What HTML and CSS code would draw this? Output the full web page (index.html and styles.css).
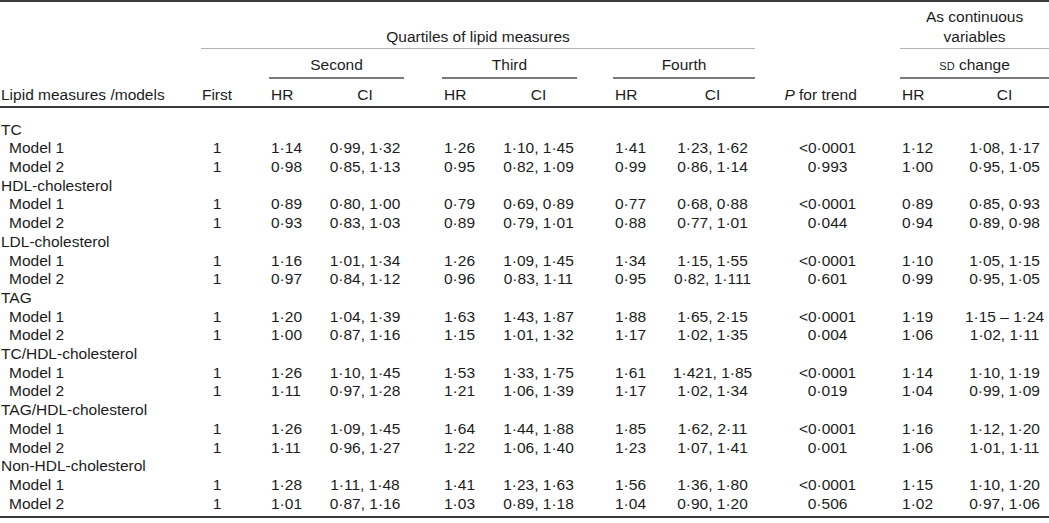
FILE: index.html
```html
<!DOCTYPE html>
<html lang="en">
<head>
<meta charset="utf-8">
<title>Lipid measures table</title>
<link rel="stylesheet" href="styles.css">
</head>
<body>
<table class="data">
  <colgroup>
    <col class="c-label"><col class="c-first"><col class="c-sp1">
    <col class="c-2hr"><col class="c-2ci"><col class="c-sp2">
    <col class="c-3hr"><col class="c-3ci"><col class="c-sp3">
    <col class="c-4hr"><col class="c-4ci"><col class="c-p">
    <col class="c-chr"><col class="c-cci">
  </colgroup>
  <thead>
    <tr class="h1">
      <th></th>
      <th colspan="10" class="span-light">Quartiles of lipid measures</th>
      <th></th>
      <th colspan="2" class="span-light">As continuous<br>variables</th>
    </tr>
    <tr class="h2">
      <th></th><th></th><th></th>
      <th colspan="2" class="span-dark">Second</th>
      <th></th>
      <th colspan="2" class="span-dark">Third</th>
      <th></th>
      <th colspan="2" class="span-dark">Fourth</th>
      <th></th>
      <th colspan="2" class="span-dark"><span class="sc">sd</span> change</th>
    </tr>
    <tr class="h3">
      <th class="lbl">Lipid measures /models</th>
      <th class="ctr">First</th>
      <th></th>
      <th class="hr">HR</th><th class="ctr">CI</th>
      <th></th>
      <th class="hr">HR</th><th class="ctr">CI</th>
      <th></th>
      <th class="hr">HR</th><th class="ctr">CI</th>
      <th class="ctr p"><i>P</i> for trend</th>
      <th class="hr">HR</th><th class="ctr">CI</th>
    </tr>
  </thead>
  <tbody>
    <tr class="grp first-row"><td class="lbl" colspan="14">TC</td></tr>
    <tr><td class="sub">Model 1</td><td class="ctr">1</td><td></td><td class="hr">1·14</td><td class="ctr">0·99, 1·32</td><td></td><td class="hr">1·26</td><td class="ctr">1·10, 1·45</td><td></td><td class="hr">1·41</td><td class="ctr">1·23, 1·62</td><td class="ctr">&lt;0·0001</td><td class="hr">1·12</td><td class="ctr">1·08, 1·17</td></tr>
    <tr><td class="sub">Model 2</td><td class="ctr">1</td><td></td><td class="hr">0·98</td><td class="ctr">0·85, 1·13</td><td></td><td class="hr">0·95</td><td class="ctr">0·82, 1·09</td><td></td><td class="hr">0·99</td><td class="ctr">0·86, 1·14</td><td class="ctr">0·993</td><td class="hr">1·00</td><td class="ctr">0·95, 1·05</td></tr>
    <tr class="grp"><td class="lbl" colspan="14">HDL-cholesterol</td></tr>
    <tr><td class="sub">Model 1</td><td class="ctr">1</td><td></td><td class="hr">0·89</td><td class="ctr">0·80, 1·00</td><td></td><td class="hr">0·79</td><td class="ctr">0·69, 0·89</td><td></td><td class="hr">0·77</td><td class="ctr">0·68, 0·88</td><td class="ctr">&lt;0·0001</td><td class="hr">0·89</td><td class="ctr">0·85, 0·93</td></tr>
    <tr><td class="sub">Model 2</td><td class="ctr">1</td><td></td><td class="hr">0·93</td><td class="ctr">0·83, 1·03</td><td></td><td class="hr">0·89</td><td class="ctr">0·79, 1·01</td><td></td><td class="hr">0·88</td><td class="ctr">0·77, 1·01</td><td class="ctr">0·044</td><td class="hr">0·94</td><td class="ctr">0·89, 0·98</td></tr>
    <tr class="grp"><td class="lbl" colspan="14">LDL-cholesterol</td></tr>
    <tr><td class="sub">Model 1</td><td class="ctr">1</td><td></td><td class="hr">1·16</td><td class="ctr">1·01, 1·34</td><td></td><td class="hr">1·26</td><td class="ctr">1·09, 1·45</td><td></td><td class="hr">1·34</td><td class="ctr">1·15, 1·55</td><td class="ctr">&lt;0·0001</td><td class="hr">1·10</td><td class="ctr">1·05, 1·15</td></tr>
    <tr><td class="sub">Model 2</td><td class="ctr">1</td><td></td><td class="hr">0·97</td><td class="ctr">0·84, 1·12</td><td></td><td class="hr">0·96</td><td class="ctr">0·83, 1·11</td><td></td><td class="hr">0·95</td><td class="ctr">0·82, 1·111</td><td class="ctr">0·601</td><td class="hr">0·99</td><td class="ctr">0·95, 1·05</td></tr>
    <tr class="grp"><td class="lbl" colspan="14">TAG</td></tr>
    <tr><td class="sub">Model 1</td><td class="ctr">1</td><td></td><td class="hr">1·20</td><td class="ctr">1·04, 1·39</td><td></td><td class="hr">1·63</td><td class="ctr">1·43, 1·87</td><td></td><td class="hr">1·88</td><td class="ctr">1·65, 2·15</td><td class="ctr">&lt;0·0001</td><td class="hr">1·19</td><td class="ctr">1·15 – 1·24</td></tr>
    <tr><td class="sub">Model 2</td><td class="ctr">1</td><td></td><td class="hr">1·00</td><td class="ctr">0·87, 1·16</td><td></td><td class="hr">1·15</td><td class="ctr">1·01, 1·32</td><td></td><td class="hr">1·17</td><td class="ctr">1·02, 1·35</td><td class="ctr">0·004</td><td class="hr">1·06</td><td class="ctr">1·02, 1·11</td></tr>
    <tr class="grp"><td class="lbl" colspan="14">TC/HDL-cholesterol</td></tr>
    <tr><td class="sub">Model 1</td><td class="ctr">1</td><td></td><td class="hr">1·26</td><td class="ctr">1·10, 1·45</td><td></td><td class="hr">1·53</td><td class="ctr">1·33, 1·75</td><td></td><td class="hr">1·61</td><td class="ctr">1·421, 1·85</td><td class="ctr">&lt;0·0001</td><td class="hr">1·14</td><td class="ctr">1·10, 1·19</td></tr>
    <tr><td class="sub">Model 2</td><td class="ctr">1</td><td></td><td class="hr">1·11</td><td class="ctr">0·97, 1·28</td><td></td><td class="hr">1·21</td><td class="ctr">1·06, 1·39</td><td></td><td class="hr">1·17</td><td class="ctr">1·02, 1·34</td><td class="ctr">0·019</td><td class="hr">1·04</td><td class="ctr">0·99, 1·09</td></tr>
    <tr class="grp"><td class="lbl" colspan="14">TAG/HDL-cholesterol</td></tr>
    <tr><td class="sub">Model 1</td><td class="ctr">1</td><td></td><td class="hr">1·26</td><td class="ctr">1·09, 1·45</td><td></td><td class="hr">1·64</td><td class="ctr">1·44, 1·88</td><td></td><td class="hr">1·85</td><td class="ctr">1·62, 2·11</td><td class="ctr">&lt;0·0001</td><td class="hr">1·16</td><td class="ctr">1·12, 1·20</td></tr>
    <tr><td class="sub">Model 2</td><td class="ctr">1</td><td></td><td class="hr">1·11</td><td class="ctr">0·96, 1·27</td><td></td><td class="hr">1·22</td><td class="ctr">1·06, 1·40</td><td></td><td class="hr">1·23</td><td class="ctr">1·07, 1·41</td><td class="ctr">0·001</td><td class="hr">1·06</td><td class="ctr">1·01, 1·11</td></tr>
    <tr class="grp"><td class="lbl" colspan="14">Non-HDL-cholesterol</td></tr>
    <tr><td class="sub">Model 1</td><td class="ctr">1</td><td></td><td class="hr">1·28</td><td class="ctr">1·11, 1·48</td><td></td><td class="hr">1·41</td><td class="ctr">1·23, 1·63</td><td></td><td class="hr">1·56</td><td class="ctr">1·36, 1·80</td><td class="ctr">&lt;0·0001</td><td class="hr">1·15</td><td class="ctr">1·10, 1·20</td></tr>
    <tr class="last-row"><td class="sub">Model 2</td><td class="ctr">1</td><td></td><td class="hr">1·01</td><td class="ctr">0·87, 1·16</td><td></td><td class="hr">1·03</td><td class="ctr">0·89, 1·18</td><td></td><td class="hr">1·04</td><td class="ctr">0·90, 1·20</td><td class="ctr">0·506</td><td class="hr">1·02</td><td class="ctr">0·97, 1·06</td></tr>
  </tbody>
</table>
</body>
</html>
```

FILE: styles.css
```css
html, body {
  margin: 0;
  padding: 0;
  background: #ffffff;
}

body {
  font-family: "Liberation Sans", Arial, sans-serif;
  font-size: 15.5px;
  color: #1c1c1c;
}

.data {
  width: 1049px;
  table-layout: fixed;
  border-collapse: separate;
  border-spacing: 0;
  border-top: 2px solid #3a3a3a;
  border-bottom: 2px solid #3a3a3a;
}

.c-label { width: 201px; }
.c-first { width: 32px; }
.c-sp1 { width: 36px; }
.c-2hr { width: 57px; }
.c-2ci { width: 78px; }
.c-sp2 { width: 38px; }
.c-3hr { width: 58px; }
.c-3ci { width: 77px; }
.c-sp3 { width: 36px; }
.c-4hr { width: 57px; }
.c-4ci { width: 85px; }
.c-p { width: 145px; }
.c-chr { width: 60px; }
.c-cci { width: 89px; }

th, td {
  padding: 0;
  font-weight: normal;
  white-space: nowrap;
  line-height: 19px;
}

thead th {
  vertical-align: bottom;
  text-align: center;
}

.h1 th {
  height: 45px;
  padding-bottom: 1px;
  line-height: 20px;
}

.h2 th {
  height: 25px;
  padding-bottom: 3px;
}

.h3 th {
  height: 24.5px;
  padding-bottom: 2.5px;
  border-bottom: 2px solid #3a3a3a;
}

.span-light {
  border-bottom: 1px solid #b4b4b4;
}

.span-dark {
  border-bottom: 2px solid #7a7a7a;
}

.sc {
  font-variant: small-caps;
}

.lbl {
  text-align: left;
  padding-left: 1px;
}

.sub {
  text-align: left;
  padding-left: 9px;
}

.ctr {
  text-align: center;
}

.hr {
  text-align: left;
  padding-left: 2px;
}

.p {
  padding-right: 14px;
}

tbody td {
  height: 18.7px;
  line-height: 18.7px;
  vertical-align: middle;
}

.first-row td {
  padding-top: 12.6px;
}

.last-row td {
  padding-bottom: 3px;
}
```
